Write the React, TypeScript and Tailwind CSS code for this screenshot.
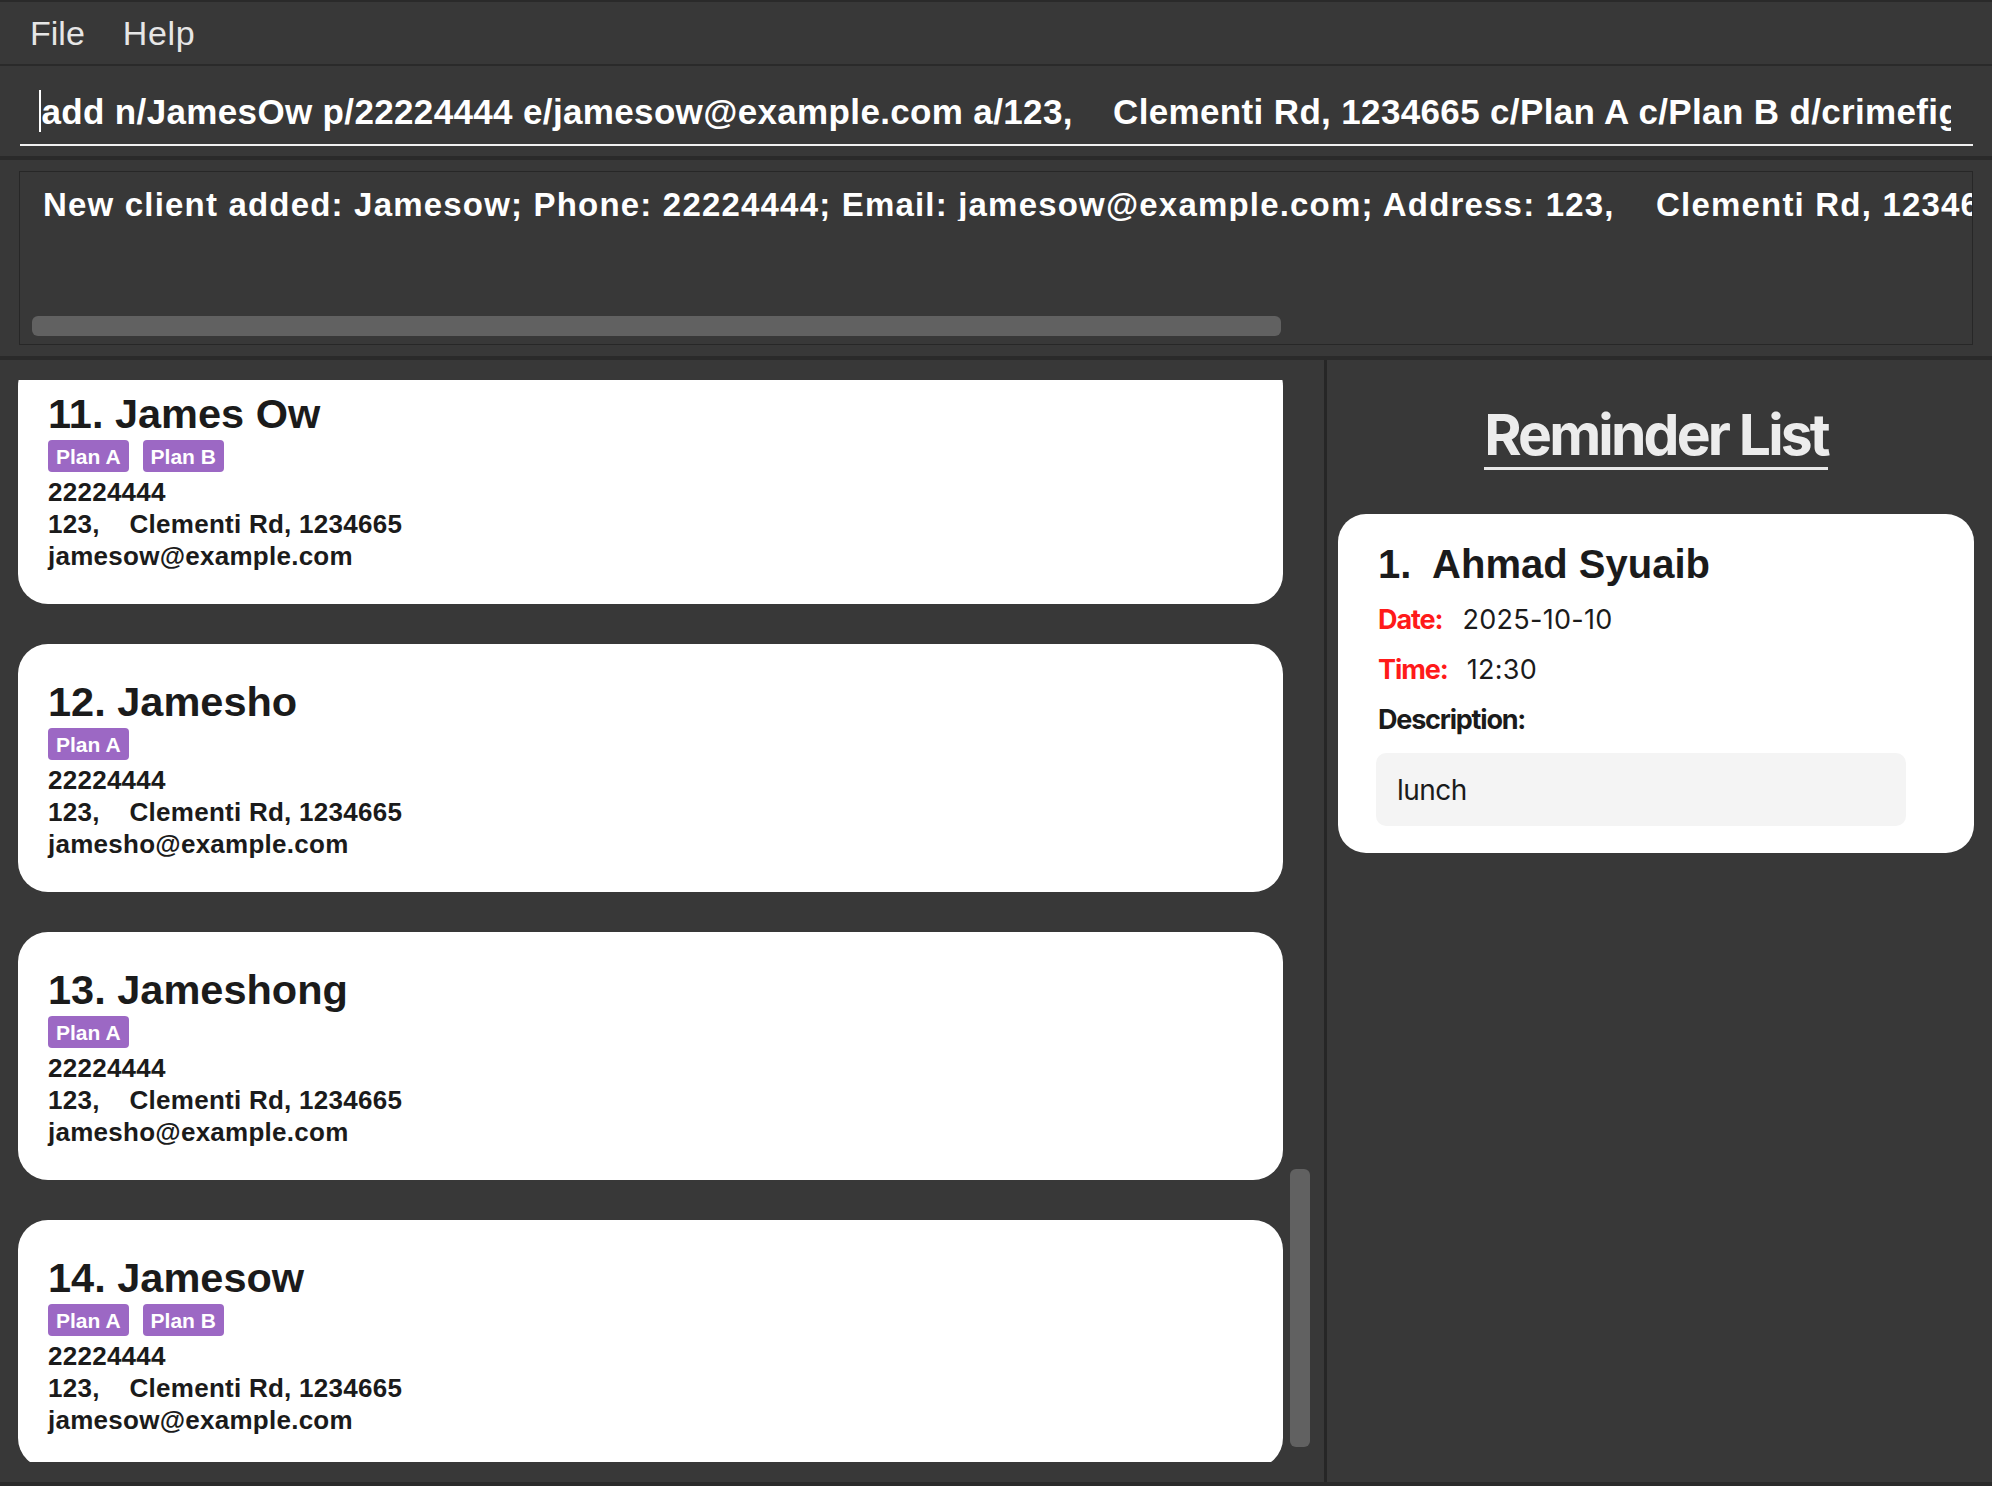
import React from 'react';

const CLIENTS = [
  { id: 11, name: 'James Ow', tags: ['Plan A', 'Plan B'], phone: '22224444', email: 'jamesow@example.com' },
  { id: 12, name: 'Jamesho', tags: ['Plan A'], phone: '22224444', email: 'jamesho@example.com' },
  { id: 13, name: 'Jameshong', tags: ['Plan A'], phone: '22224444', email: 'jamesho@example.com' },
  { id: 14, name: 'Jamesow', tags: ['Plan A', 'Plan B'], phone: '22224444', email: 'jamesow@example.com' },
];

const ADDRESS = '123,    Clementi Rd, 1234665';

const COMMAND =
  'add n/JamesOw p/22224444 e/jamesow@example.com a/123,    Clementi Rd, 1234665 c/Plan A c/Plan B d/crimefighter';

const RESULT =
  'New client added: Jamesow; Phone: 22224444; Email: jamesow@example.com; Address: 123,    Clementi Rd, 1234665; Plans: [Plan A][Plan B]; Description: crimefighter';

function ClientCard({ client }: { client: (typeof CLIENTS)[number] }) {
  return (
    <div className="h-[248px] shrink-0 rounded-[30px] bg-white pt-[37px] pl-[30px] text-[#1b1b1b]">
      <div className="h-[41px] text-[41.5px] leading-none font-bold">
        {client.id}. {client.name}
      </div>
      <div className="mt-[6px] flex gap-[14px]">
        {client.tags.map((t) => (
          <span
            key={t}
            className="flex h-[32px] items-center rounded-[4px] bg-[#9c68c4] px-[8px] text-[21px] leading-none font-bold text-white"
          >
            {t}
          </span>
        ))}
      </div>
      <div className="mt-[4px] text-[26px] leading-[32px] font-bold tracking-[0.01em] whitespace-pre">
        <div>{client.phone}</div>
        <div>{ADDRESS}</div>
        <div>{client.email}</div>
      </div>
    </div>
  );
}

export default function App() {
  return (
    <div className="flex h-[1486px] w-[1992px] flex-col overflow-hidden bg-[#383838] font-['Liberation_Sans',Arial,sans-serif]">
      {/* menu bar */}
      <div className="flex h-[64px] shrink-0 items-center border-t-2 border-[#2a2a2a] pl-[30px] text-[34px] leading-none text-[#e6e6e6]">
        <span>File</span>
        <span className="ml-[38px] tracking-[0.02em]">Help</span>
      </div>
      <div className="h-[2px] shrink-0 bg-[#2a2a2a]" />

      {/* command box */}
      <div className="h-[90px] shrink-0 pt-[24px] pl-[20px] pr-[19px]">
        <div className="overflow-hidden border-b-2 border-[#f0f0f0] pb-[12px] pl-[19px] pr-[22px]">
          <div className="flex h-[42px] items-center overflow-hidden whitespace-pre text-[35px] leading-none font-bold tracking-[0.01em] text-white">
            <span className="mr-[1px] h-[42px] w-[1.5px] shrink-0 bg-white" />
            {COMMAND}
          </div>
        </div>
      </div>
      <div className="h-[4px] shrink-0 bg-[#2a2a2a]" />

      {/* result display */}
      <div className="h-[196px] shrink-0 pt-[11px] pl-[19px] pr-[19px]">
        <div className="flex h-[174px] flex-col justify-between overflow-hidden border border-[#272727] pt-[16px] pb-[8px]">
          <div className="overflow-hidden whitespace-pre pl-[23px] text-[33px] leading-none font-bold tracking-[0.036em] text-white">
            {RESULT}
          </div>
          <div className="ml-[12px] h-[20px] w-[1249px] rounded-[6px] bg-[#616161]" />
        </div>
      </div>
      <div className="h-[4px] shrink-0 bg-[#2a2a2a]" />

      {/* main */}
      <div className="flex min-h-0 flex-1">
        {/* client list */}
        <div className="flex w-[1324px] shrink-0 py-[20px] pl-[18px]">
          <div className="h-[1082px] w-[1265px] overflow-hidden">
            <div className="-mt-[24px] flex flex-col gap-[40px]">
              {CLIENTS.map((c) => (
                <ClientCard key={c.id} client={c} />
              ))}
            </div>
          </div>
          <div className="ml-[7px] flex w-[20px] flex-col">
            <div className="mt-[789px] h-[278px] rounded-[6px] bg-[#616161]" />
          </div>
        </div>
        <div className="w-[3px] shrink-0 bg-[#262626]" />

        {/* reminder list */}
        <div className="flex flex-1 flex-col pl-[11px] pr-[18px]">
          <div className="flex justify-center pt-[46px]">
            <span className="inline-block border-b-[3px] border-[#e8e8e8] pb-[4px] font-['Inter',sans-serif] text-[57px] leading-none font-bold tracking-[-0.05em] text-[#ececec]">
              Reminder List
            </span>
          </div>
          <div className="mt-[44px] rounded-[28px] bg-white pt-[30px] pb-[27px] pl-[40px] text-[#1b1b1b]">
            <div className="h-[40px] whitespace-pre text-[40px] leading-none font-bold">1.  Ahmad Syuaib</div>
            <div className="mt-[22px] flex h-[27px] items-baseline font-['Inter',sans-serif] text-[27px] leading-none">
              <span className="font-bold tracking-[-0.04em] text-[#ff1a1a]">Date:</span>
              <span className="ml-[20px] tracking-[0.01em]">2025-10-10</span>
            </div>
            <div className="mt-[23px] flex h-[27px] items-baseline font-['Inter',sans-serif] text-[27px] leading-none">
              <span className="font-bold tracking-[-0.04em] text-[#ff1a1a]">Time:</span>
              <span className="ml-[19px] tracking-[0.01em]">12:30</span>
            </div>
            <div className="mt-[23px] h-[27px] font-['Inter',sans-serif] text-[27px] leading-none font-bold tracking-[-0.045em]">
              Description:
            </div>
            <div className="mt-[20px] -ml-[2px] flex h-[73px] w-[530px] items-center rounded-[10px] bg-[#f4f4f4] pl-[21px] font-['Inter',sans-serif] text-[28px] leading-none tracking-[-0.02em]">
              lunch
            </div>
          </div>
        </div>
      </div>
      <div className="h-[4px] shrink-0 bg-[#2a2a2a]" />
    </div>
  );
}
